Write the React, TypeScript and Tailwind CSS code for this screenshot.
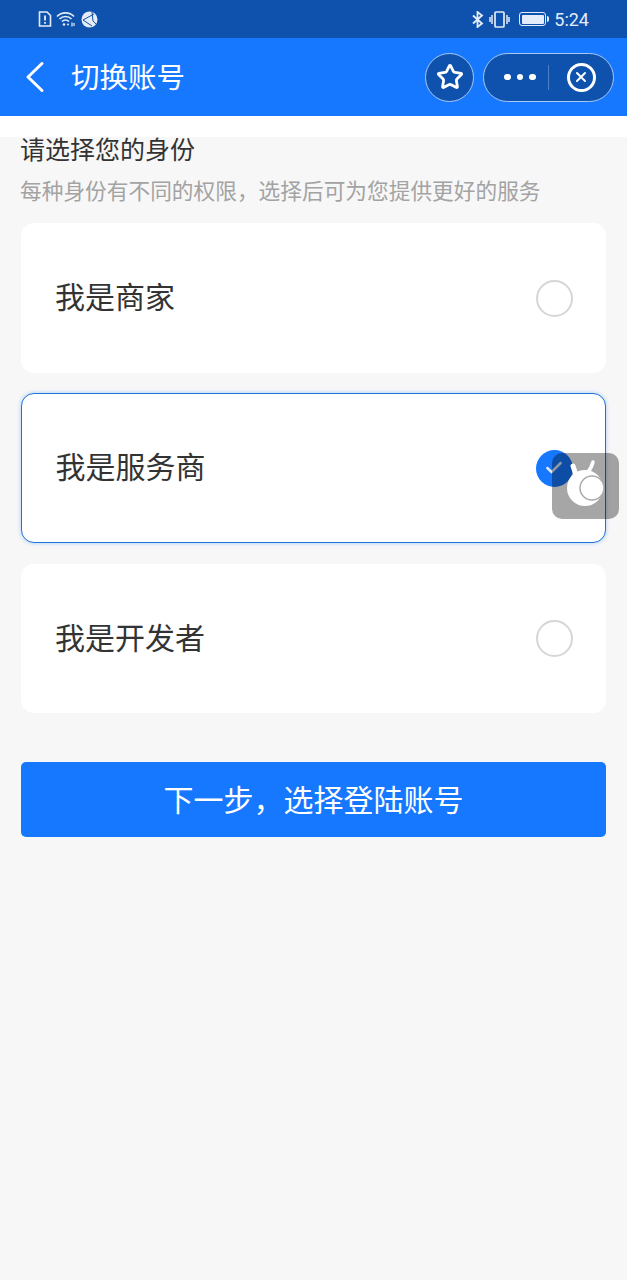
import { Check, Star, X } from "lucide-react";

const font = { cjk: "font-['Noto_Sans_CJK_SC','Noto_Sans',sans-serif]" };

function StatusBar() {
  return (
    <div className="h-[38px] bg-[#0f52ad] flex items-center justify-between pl-[38px] pr-[38px] text-[#e3ecf8]">
      <div className="flex items-center gap-[4px]">
        <svg width="14" height="16" viewBox="0 0 14 16" fill="none" stroke="currentColor" strokeWidth="1.6">
          <path d="M1.5 1h7.5l3.500 3.500V15h-11z" />
          <path d="M7 4.500v5M7 11v1.800" strokeWidth="1.800" />
        </svg>
        <svg width="20" height="16" viewBox="0 0 20 16" fill="none" stroke="currentColor" strokeWidth="1.700">
          <path d="M1 5.500a12 12 0 0 1 17 0" />
          <path d="M3.500 8a8.500 8.500 0 0 1 12 0" />
          <path d="M6 10.500a5 5 0 0 1 7 0" />
          <circle cx="8" cy="13.500" r="1.300" fill="currentColor" stroke="none" />
          <circle cx="12" cy="13.500" r="1" fill="currentColor" stroke="none" />
          <path d="M16 11.500v4M18 12v3" strokeWidth="1.200" />
        </svg>
        <svg width="17" height="17" viewBox="0 0 17 17" className="ml-[1px]">
          <circle cx="8.500" cy="8.500" r="8" fill="currentColor" />
          <path d="M2 9l11-6M2 9l9 6M11 1l1 9 3 3" stroke="#0f52ad" strokeWidth="1" fill="none" />
        </svg>
      </div>
      <div className="flex items-center">
        <svg width="12" height="17" viewBox="0 0 12 17" fill="none" stroke="currentColor" strokeWidth="1.800">
          <path d="M1 4.500l9 8-4.500 3.500V1L10 4.500l-9 8" />
        </svg>
        <svg width="21" height="17" viewBox="0 0 21 17" fill="none" stroke="currentColor" className="ml-[5px]">
          <rect x="6" y="1" width="9" height="15" rx="1" strokeWidth="1.700" />
          <path d="M3 4v9M1 6v5M18 4v9M20 6v5" strokeWidth="1.500" />
        </svg>
        <div className="ml-[9px] w-[27px] h-[14px] border border-current rounded-[3px] p-[1.500px]">
          <div className="w-full h-full bg-[#e3ecf8] rounded-[1px]" />
        </div>
        <div className="w-[2px] h-[6px] bg-current ml-[1px] rounded-r-sm" />
        <span className="ml-[5px] text-[18px] font-['Roboto',sans-serif]">5:24</span>
      </div>
    </div>
  );
}

function NavBar() {
  return (
    <div className="h-[78px] bg-[#1677ff] flex items-center text-white">
      <svg width="20" height="32" viewBox="0 0 20 32" fill="none" stroke="currentColor" strokeWidth="3" strokeLinecap="round" strokeLinejoin="round" className="ml-[25px]">
        <path d="M17 2.500L3 16l14 13.500" />
      </svg>
      <span className={`ml-[26px] pb-[2px] text-[28.500px] leading-none ${font.cjk}`}>切换账号</span>
      <div className="ml-auto flex items-center gap-[9px] pr-[13px]">
        <div className="w-[49px] h-[49px] rounded-full bg-[#0f52ad] border border-[#a9c8f2] flex items-center justify-center">
          <Star size={28} strokeWidth={2.400} />
        </div>
        <div className="w-[131px] h-[49px] rounded-full bg-[#0f52ad] border border-[#a9c8f2] flex items-center">
          <div className="w-[64px] flex items-center justify-center gap-[6px] pl-[8px]">
            <span className="w-[6.500px] h-[6.500px] rounded-full bg-white" />
            <span className="w-[6.500px] h-[6.500px] rounded-full bg-white" />
            <span className="w-[6.500px] h-[6.500px] rounded-full bg-white" />
          </div>
          <div className="w-px h-[25px] bg-[#4d80c7]" />
          <div className="flex-1 flex items-center justify-center">
            <div className="w-[29px] h-[29px] rounded-full border-[3px] border-white flex items-center justify-center">
              <X size={16} strokeWidth={3} />
            </div>
          </div>
        </div>
      </div>
    </div>
  );
}

function RoleCard({ label, selected, last }: { label: string; selected?: boolean; last?: boolean }) {
  return (
    <div
      className={`rounded-[13px] bg-white flex items-center justify-between ${
        last ? "h-[149px] mt-[1px]" : "h-[150px]"
      } ${
        selected
          ? "pl-[34.500px] pr-[32.500px] border-[1.500px] border-[#1d74d6] shadow-[0_0_4px_rgba(22,119,255,0.35)]"
          : "pl-[35px] pr-[33px]"
      }`}
    >
      <span className={`-ml-[1px] pb-[6px] text-[30px] leading-none text-[#333] ${font.cjk}`}>{label}</span>
      {selected ? (
        <div className="w-[37px] h-[37px] rounded-full bg-[#1677ff] flex items-center justify-center text-[#dbe8fa]">
          <Check size={20} strokeWidth={3} />
        </div>
      ) : (
        <div className={`w-[37px] h-[37px] rounded-full border-2 border-[#d6d6d6] ${last ? "" : "mt-[1px]"}`} />
      )}
    </div>
  );
}

export default function App() {
  return (
    <div className={`relative w-[627px] h-[1280px] overflow-hidden bg-[#f7f7f7] ${font.cjk}`}>
      <StatusBar />
      <NavBar />
      <div className="h-[21px] bg-white" />

      <div className="px-[21px]">
        <h1 className="-ml-[1px] text-[25px] leading-[22px] text-[#333] font-normal">请选择您的身份</h1>
        <p className="-ml-[1px] mt-[17px] text-[21.700px] leading-[28px] text-[#a3a3a3] whitespace-nowrap">
          每种身份有不同的权限，选择后可为您提供更好的服务
        </p>

        <div className="mt-[19px] flex flex-col gap-[20px]">
          <RoleCard label="我是商家" />
          <RoleCard label="我是服务商" selected />
          <RoleCard label="我是开发者" last />
        </div>

        <button className="mt-[49px] w-full h-[75px] rounded-[5px] bg-[#1677ff] text-white text-[30px] leading-none pb-[4px]">
          下一步，选择登陆账号
        </button>
      </div>

      {/* Floating assistant overlay */}
      <div className="absolute left-[552px] top-[453px] w-[67px] h-[66px] rounded-[10px] bg-black/35 flex items-center justify-center">
        <svg width="67" height="66" viewBox="0 0 67 66">
          <path d="M21 13l3 9" stroke="#fff" strokeWidth="5" strokeLinecap="round" fill="none" />
          <path d="M41 9c-1 4-3 8-6 11" stroke="#fff" strokeWidth="3.500" strokeLinecap="round" fill="none" />
          <circle cx="33" cy="35" r="18" fill="#fff" />
          <circle cx="40" cy="35" r="12" fill="#fff" stroke="#aaaaaa" strokeWidth="1.500" />
        </svg>
      </div>
    </div>
  );
}
